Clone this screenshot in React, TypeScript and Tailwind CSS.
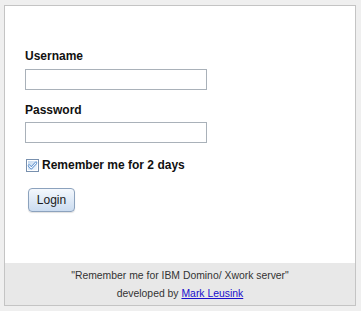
import React from "react";

const font = { fontFamily: '"Liberation Sans", Arial, sans-serif' };

function CheckMark() {
  return (
    <svg width="13" height="13" viewBox="0 0 13 13" className="block">
      <defs>
        <linearGradient id="cb" x1="0" y1="0" x2="1" y2="1">
          <stop offset="0" stopColor="#c3d8ef" />
          <stop offset="1" stopColor="#f3f8fd" />
        </linearGradient>
      </defs>
      <rect x="0.5" y="0.5" width="12" height="12" fill="#fff" stroke="#7890ae" />
      <rect x="2" y="2" width="9" height="9" fill="url(#cb)" />
      <path d="M3 6.6 L5.3 9 L10 3.8" fill="none" stroke="#4f88cc" strokeWidth="2.6" strokeLinecap="round" strokeLinejoin="round" />
      <path d="M3 6.6 L5.3 9 L10 3.8" fill="none" stroke="#ffffff" strokeWidth="1.1" strokeLinecap="round" strokeLinejoin="round" />
    </svg>
  );
}

export default function App() {
  return (
    <div className="min-h-[311px] w-[361px] bg-[#efefef] pl-[4px] pt-[5px]" style={font}>
      <div className="flex h-[301px] w-[352px] flex-col border border-[#c4c4c4] bg-white">
        <div className="flex flex-1 flex-col items-start pl-[20px] pt-[43px]">
          <label className="block text-[12px] font-bold leading-[14px] text-[#111]">Username</label>
          <input type="text" className="mt-[6px] h-[21px] w-[182px] border border-[#a9b1b9] bg-white outline-none" />
          <label className="mt-[13px] block text-[12px] font-bold leading-[14px] text-[#111]">Password</label>
          <input type="password" className="mt-[5px] h-[21px] w-[182px] border border-[#a9b1b9] bg-white outline-none" />
          <div className="mt-[15px] flex items-center gap-[3px] pl-[1px]">
            <CheckMark />
            <span className="text-[12px] font-bold leading-[14px] text-[#111]">Remember me for 2 days</span>
          </div>
          <button className="ml-[3px] mt-[16px] h-[24px] w-[47px] rounded-[4px] border border-[#8ca2bd] bg-gradient-to-b from-[#f4f8fd] to-[#cbdcf0] text-[12px] leading-[14px] text-[#1a1a1a] shadow-[0_1px_1px_rgba(0,0,0,0.12)]">
            Login
          </button>
        </div>
        <div className="flex h-[42px] flex-col items-center bg-[#e8e8e8] pt-[4px] text-[10.4px] leading-[18px] text-[#333]">
          <div>"Remember me for IBM Domino/ Xwork server"</div>
          <div>
            developed by <a href="#" className="text-[#1a0dcc] underline">Mark Leusink</a>
          </div>
        </div>
      </div>
    </div>
  );
}
